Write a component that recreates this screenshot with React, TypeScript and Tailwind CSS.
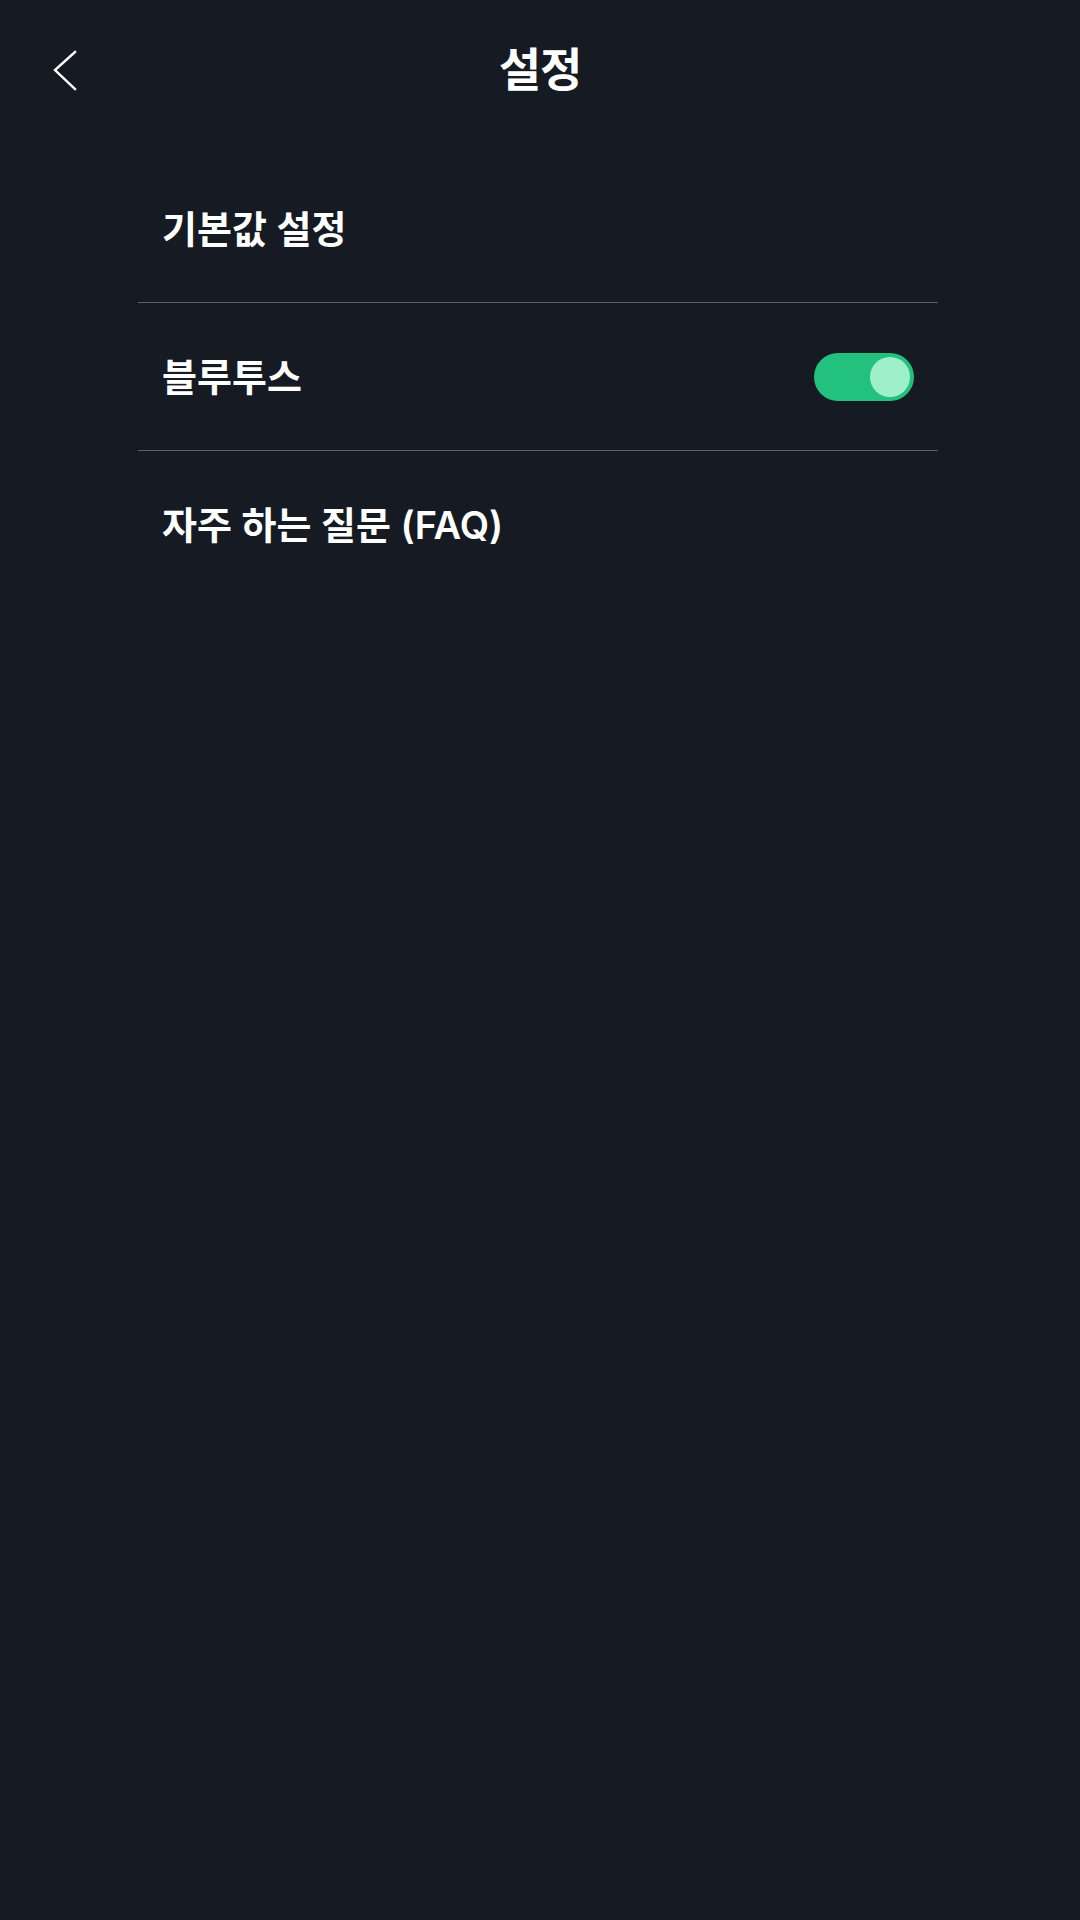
import { useState } from "react";

const FONT = { fontFamily: 'Inter, "Noto Sans CJK KR", "Noto Sans", sans-serif' };

function Toggle({ on, onChange }: { on: boolean; onChange: (v: boolean) => void }) {
  return (
    <button
      type="button"
      role="switch"
      aria-checked={on}
      onClick={() => onChange(!on)}
      className={`flex h-[48px] w-[100px] items-center rounded-full px-[4px] ${
        on ? "justify-end bg-[#22c27e]" : "justify-start bg-[#3a3f4b]"
      }`}
    >
      <span className={`block h-[40px] w-[40px] rounded-full ${on ? "bg-[#9ef0cb]" : "bg-[#cfd3da]"}`} />
    </button>
  );
}

export default function App() {
  const [bluetooth, setBluetooth] = useState(true);

  return (
    <div className="min-h-[1920px] w-full bg-[#161a23] text-white" style={FONT}>
      <header className="relative flex h-[140px] items-center justify-center">
        <button type="button" aria-label="뒤로" className="absolute left-[40px] top-[40px] p-2">
          <svg width="40" height="60" viewBox="0 0 40 60" className="-ml-2 -mt-2" fill="none">
            <path d="M35 12 L15 30 L35 49" stroke="#fff" strokeWidth="2.4" strokeLinecap="square" />
          </svg>
        </button>
        <h1 className="-mt-[2px] text-[46px] font-bold leading-none tracking-tight">설정</h1>
      </header>

      <ul className="ml-[138px] mt-[16px] w-[800px]">
        <li className="flex h-[147px] items-center border-b border-[#5b5f6d] pl-6 pr-6">
          <span className="text-[38px] font-semibold leading-none">기본값 설정</span>
        </li>
        <li className="flex h-[148px] items-center justify-between border-b border-[#5b5f6d] pl-6 pr-6">
          <span className="text-[38px] font-semibold leading-none">블루투스</span>
          <Toggle on={bluetooth} onChange={setBluetooth} />
        </li>
        <li className="flex h-[147px] items-center pl-6 pr-6">
          <span className="text-[38px] font-semibold leading-none">자주 하는 질문 (FAQ)</span>
        </li>
      </ul>
    </div>
  );
}
